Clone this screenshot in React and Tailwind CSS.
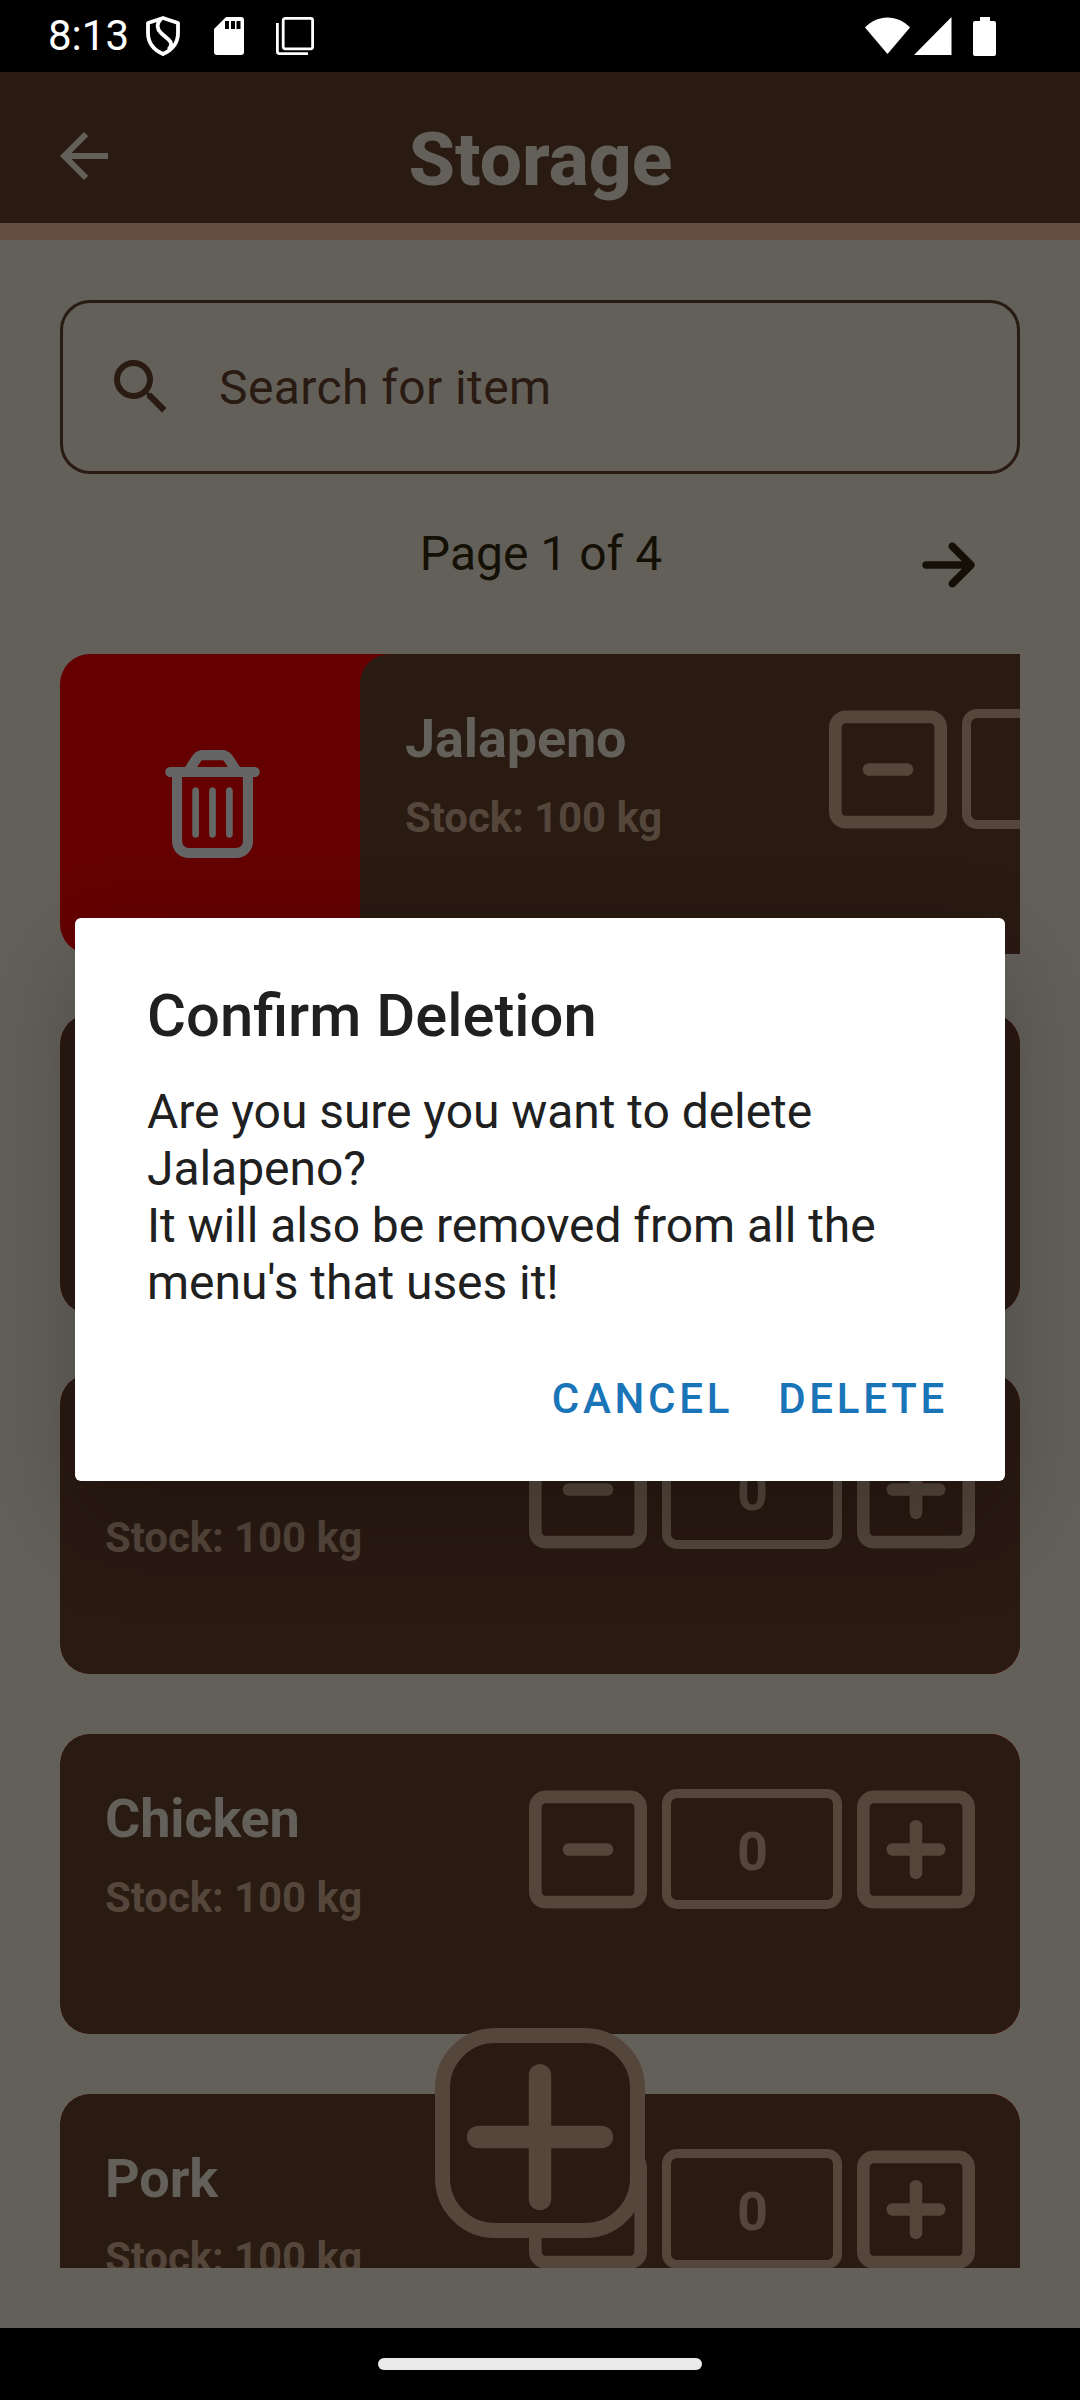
import { FaArrowRight, FaPlus, FaRegSquareMinus, FaRegSquarePlus, FaRegTrashCan } from "react-icons/fa6";
import { MdArrowBack } from "react-icons/md";

function StatusBar() {
  return (
    <div className="flex h-[72px] shrink-0 items-center bg-black pl-12 text-white">
      <span className="w-[98px] text-[42px] leading-[48px]">8:13</span>
      <svg className="h-[40px] w-[34px]" viewBox="0 0 34 40" fill="none" stroke="currentColor" strokeWidth="3.800">
        <path d="M17 2 2 7v10c0 10 6 17 15 21 9-4 15-11 15-21V7Z" strokeLinejoin="round" />
        <path d="M15 3c-5 5-4 10 0 14l7.500 6.500c3.500 3 3.500 6 0 10" />
      </svg>
      <svg className="ml-[34px] h-[38px] w-[30px]" viewBox="0 0 30 38">
        <path fill="currentColor" d="M12 0h15a3 3 0 0 1 3 3v32a3 3 0 0 1-3 3H3a3 3 0 0 1-3-3V12Z" />
        <path fill="#000" d="M11 4h4v8h-4zM17 4h4v8h-4zM22.500 4h4v8h-4z" />
      </svg>
      <svg className="ml-8 h-[38px] w-[38px]" viewBox="0 0 38 38" fill="none" stroke="currentColor" strokeWidth="2.800">
        <rect x="7.200" y="1.400" width="29.400" height="30.400" rx="2" />
        <path d="M1.400 6v28.600a2 2 0 0 0 2 2H32" />
      </svg>
      <svg className="ml-auto h-[38px] w-[46px]" viewBox="0 0 46 38" fill="currentColor">
        <path d="M0 10.500C12-3 33-3 45 10.500L22.500 37Z" />
      </svg>
      <svg className="ml-[3px] h-[38px] w-[38px]" viewBox="0 0 38 38" fill="currentColor">
        <path d="M37.500 0v38H0Z" />
      </svg>
      <svg className="mr-[84px] ml-[21px] h-[39px] w-[23px]" viewBox="0 0 23 39" fill="currentColor">
        <path d="M7 0h10v4h4a2 2 0 0 1 2 2v31a2 2 0 0 1-2 2H2a2 2 0 0 1-2-2V6a2 2 0 0 1 2-2h5Z" />
      </svg>
    </div>
  );
}

function Header() {
  return (
    <header className="grid h-[168px] shrink-0 grid-cols-[1fr_auto_1fr] items-start border-b-[17px] border-[#644e40] bg-[#291a12] text-[#63605a]">
      <MdArrowBack className="mt-12 ml-12 size-[72px]" />
      <h1 className="mt-[43px] pl-px text-[75px] leading-[88px] font-extrabold">Storage</h1>
    </header>
  );
}

function SearchBox() {
  return (
    <div className="flex h-[174px] shrink-0 items-center rounded-[30px] border-[3px] border-[#291a12] pl-[42px] text-[#291a12]">
      <svg className="size-[72px]" viewBox="0 0 24 24" fill="currentColor">
        <path d="M9.500 3A6.500 6.500 0 0 1 16 9.500c0 1.610-.590 3.090-1.560 4.230l.270.270h.790l5 5-1.500 1.500-5-5v-.790l-.270-.270A6.516 6.516 0 0 1 9.500 16a6.500 6.500 0 0 1 0-13m0 2C7 5 5 7 5 9.500S7 14 9.500 14 14 12 14 9.500 12 5 9.500 5" />
      </svg>
      <span className="mt-[2px] ml-[42px] text-[48px] leading-[56px] tracking-[0.4px]">Search for item</span>
    </div>
  );
}

function Pagination() {
  return (
    <div className="grid h-[180px] shrink-0 grid-cols-[1fr_auto_1fr] items-start text-[#151005]">
      <span className="col-start-2 mt-[52px] pl-[2px] text-[48px] leading-[56px]">Page 1 of 4</span>
      <FaArrowRight className="mt-[61px] mr-[45px] h-[60px] w-[53px] justify-self-end" />
    </div>
  );
}

function ItemCard({ name, stock, open }) {
  return (
    <div className="flex h-[300px] w-[960px] shrink-0 overflow-hidden rounded-l-[30px] bg-[#640000]">
      {open && (
        <div className="flex w-[300px] shrink-0 items-center justify-center pb-px pl-1">
          <FaRegTrashCan className="h-[108px] w-[95px] text-[#656565]" />
        </div>
      )}
      <div className="flex w-[960px] shrink-0 items-start justify-between rounded-[30px] bg-[#291a12] px-[45px] font-bold">
        {stock && (
          <>
            <div className="mt-[53px]">
              <div className="h-[64px] text-[54px] leading-[64px] tracking-[-0.15px] text-[#63605a]">{name}</div>
              <div className="mt-[22px] text-[42px] leading-[50px] tracking-[-0.1px] text-[#54463b]">{stock}</div>
            </div>
            <div className="mt-[48px] flex items-center gap-[15px] text-[#54463b]">
              <FaRegSquareMinus className="h-[135px] w-[118px]" />
              <div className="mb-[2px] flex h-[120px] w-[180px] items-center justify-center rounded-[15px] border-[9px] border-[#54463b] pt-[6px] pl-px text-[54px] leading-[64px]">
                {open ? "" : "0"}
              </div>
              <FaRegSquarePlus className="h-[135px] w-[118px]" />
            </div>
          </>
        )}
      </div>
    </div>
  );
}

function ClosedCard({ name, stock }) {
  return (
    <div className="shrink-0 overflow-hidden rounded-[30px]">
      <ItemCard name={name} stock={stock} />
    </div>
  );
}

function ConfirmDialog() {
  return (
    <div className="absolute top-[918px] left-[75px] flex h-[563px] w-[930px] flex-col rounded-[6px] bg-white px-[72px] text-[#202020] shadow-[0_40px_100px_0_rgba(0,0,0,0.22)]">
      <h2 className="mt-[63px] text-[60px] leading-[70px] font-medium">
        <span className="inline-block origin-left scale-x-[0.996]">Confirm Deletion</span>
      </h2>
      <p className="mt-[32px] text-[48px] leading-[57px] tracking-[-0.05px] whitespace-nowrap">
        Are you sure you want to delete
        <br />
        Jalapeno?
        <br />
        It will also be removed from all the
        <br />
        menu's that uses it!
      </p>
      <div className="mt-[63px] -mr-[15px] flex justify-end gap-[45px] text-[42px] leading-[50px] font-medium tracking-[3.75px] text-[#1a74b8]">
        <span>CANCEL</span>
        <span>DELETE</span>
      </div>
    </div>
  );
}

export default function App() {
  return (
    <div className="relative flex h-[2400px] w-[1080px] flex-col overflow-hidden bg-[#63605a] font-[Roboto,sans-serif]">
      <StatusBar />
      <Header />
      <main className="flex h-[2088px] flex-col px-[60px] pt-[60px]">
        <SearchBox />
        <Pagination />
        <div className="flex h-[1614px] flex-col gap-[60px] overflow-hidden">
          <ItemCard name="Jalapeno" stock="Stock: 100 kg" open />
          <ClosedCard />
          <ClosedCard stock="Stock: 100 kg" />
          <ClosedCard name="Chicken" stock="Stock: 100 kg" />
          <ClosedCard name="Pork" stock="Stock: 100 kg" />
        </div>
      </main>
      <div className="flex h-[72px] items-center justify-center bg-black">
        <div className="h-3 w-[324px] rounded-full bg-[#ebebeb]" />
      </div>
      <div className="absolute top-[2028px] left-[435px] flex size-[210px] items-center justify-center rounded-[60px] border-[15px] border-[#54463b] bg-[#291a12] pt-[8px] text-[#54463b]">
        <FaPlus className="h-[180px] w-[158px] shrink-0" />
      </div>
      <ConfirmDialog />
    </div>
  );
}
